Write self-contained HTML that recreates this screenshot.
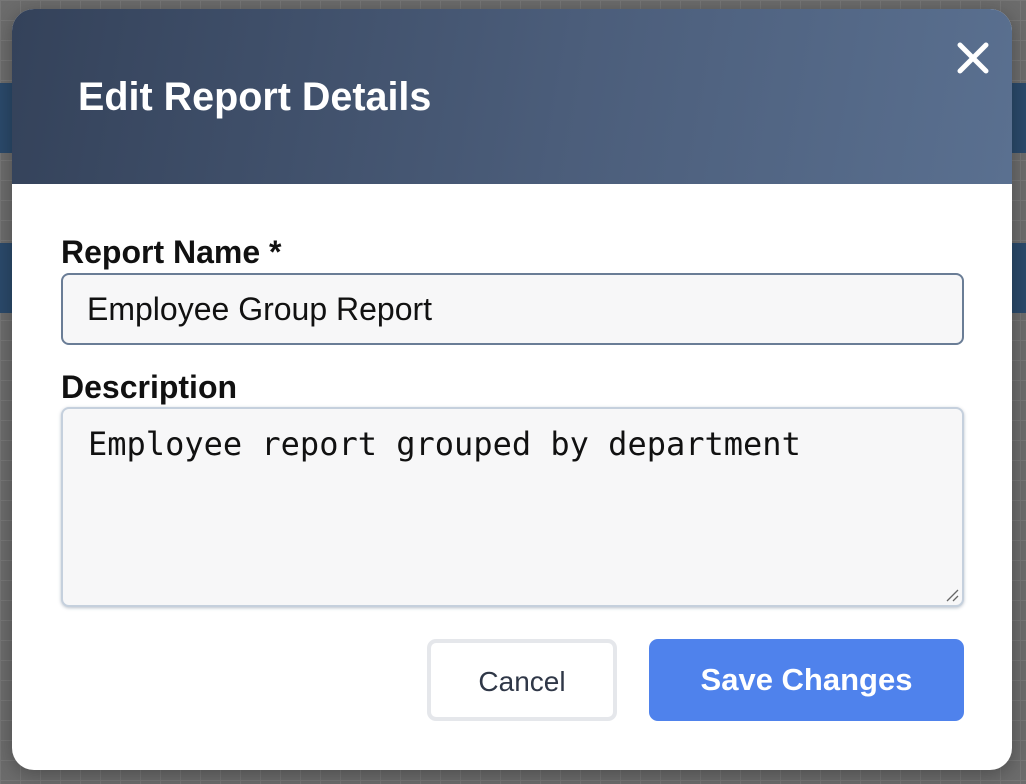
<!DOCTYPE html>
<html><head><style>
html,body{margin:0;padding:0}
body{width:1026px;height:784px;position:relative;overflow:hidden;background:#6c6c6c;
background-image:linear-gradient(#777 1px,transparent 1px),linear-gradient(90deg,#777 1px,transparent 1px);background-size:20px 20px;font-family:"Liberation Sans",Arial,sans-serif}
.bar{position:absolute;background:#2b4a6b;left:0;right:0;height:70px}
.modal{position:absolute;left:12px;top:9px;width:1000px;height:761px;background:#fff;border-radius:22px;overflow:hidden;box-shadow:0 4px 20px rgba(0,0,0,.3)}
.hdr{height:175px;background:linear-gradient(100deg,#34425a 0%,#4b5d7a 55%,#5a7090 100%);position:relative}
.hdr h1{position:absolute;left:66px;top:66px;margin:0;color:#fff;font-size:39.5px;font-weight:bold;letter-spacing:0}
.x{position:absolute;left:944px;top:32px}
label{position:absolute;left:49px;font-weight:bold;font-size:32px;color:#111}
.inp{position:absolute;left:49px;width:903px;background:#f7f7f8;border:2px solid #6a7d96;border-radius:8px;box-sizing:border-box}
.ta{border:2px solid #c5d0dd;box-shadow:0 1px 3px rgba(60,80,110,.35)}
.btn{position:absolute;top:630px;height:82px;border-radius:9px;box-sizing:border-box;font-size:28px;text-align:center;line-height:78px}
</style></head><body>
<div class="bar" style="top:83px"></div>
<div class="bar" style="top:243px"></div>
<div class="modal">
 <div class="hdr"><h1>Edit Report Details</h1>
  <svg class="x" width="34" height="34" viewBox="0 0 34 34"><path d="M4 4L30 30M30 4L4 30" stroke="#fff" stroke-width="5" stroke-linecap="round"/></svg>
 </div>
 <label style="top:225px">Report Name *</label>
 <div class="inp" style="top:264px;height:72px;font-size:32px;line-height:68px;padding-left:24px;color:#111">Employee Group Report</div>
 <label style="top:360px">Description</label>
 <div class="inp ta" style="top:398px;height:200px;font-family:'DejaVu Sans Mono','Liberation Mono',monospace;font-size:32px;padding:17px 0 0 25px;color:#111;line-height:36px">Employee report grouped by department
  <svg style="position:absolute;right:3px;bottom:3px" width="14" height="14"><path d="M2 13L13 2M8 13L13 8" stroke="#666" stroke-width="1.3"/></svg></div>
 <div class="btn" style="left:415px;width:190px;border:4px solid #e5e7eb;color:#2f3747;background:#fff">Cancel</div>
 <div class="btn" style="left:637px;width:315px;background:#4f82ec;color:#fff;font-weight:bold;line-height:82px;font-size:31px">Save Changes</div>
</div>
</body></html>
